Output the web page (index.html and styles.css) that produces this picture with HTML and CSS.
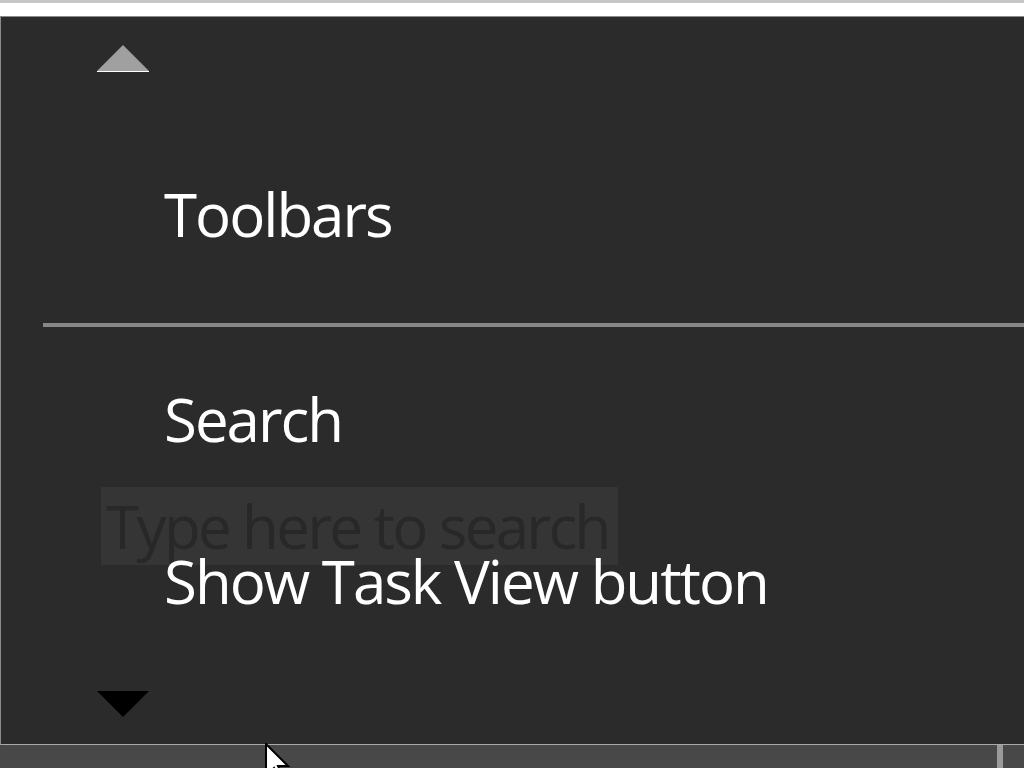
FILE: index.html
```html
<!DOCTYPE html>
<html lang="en">
<head>
<meta charset="utf-8">
<title>Taskbar menu</title>
<link rel="stylesheet" href="styles.css">
</head>
<body>
<div class="top-edge"></div>
<div class="top-strip"></div>
<div class="menu">
  <div class="ghost-search">Type here to search</div>
  <div class="arrow arrow-up"></div>
  <div class="item item-toolbars">Toolbars</div>
  <div class="separator"></div>
  <div class="item item-search">Search</div>
  <div class="item item-taskview">Show Task View button</div>
  <div class="arrow arrow-down"></div>
</div>
<div class="taskbar">
  <div class="taskbar-divider"></div>
  <svg class="cursor" width="26" height="40" viewBox="-1 -1 26 40"><polygon points="0,0 0,32 8,24 14,36 18,34 12,22 22,22" fill="#fff" stroke="#000" stroke-width="2" stroke-linejoin="miter"/></svg>
</div>
</body>
</html>
```

FILE: styles.css
```css
html, body {
  margin: 0;
  padding: 0;
}
body {
  width: 1024px;
  height: 768px;
  overflow: hidden;
  background: #484848;
  font-family: "Open Sans", "Noto Sans", sans-serif;
}
.top-edge {
  height: 3px;
  background: #c6c6c6;
}
.top-strip {
  height: 13px;
  background: #ffffff;
  border-bottom: 1px solid #8a8a8a;
}
.menu {
  position: relative;
  height: 728px;
  background: #2b2b2b;
  border-left: 1px solid #8c8c8c;
  border-bottom: 1px solid #aaaaaa;
  box-sizing: border-box;
  display: flex;
  flex-direction: column;
  color: #ffffff;
}
.ghost-search {
  position: absolute;
  left: 100px;
  top: 470px;
  width: 517px;
  height: 78px;
  background: #353535;
  color: #282828;
  font-size: 60px;
  letter-spacing: -2.6px;
  line-height: 78px;
  padding-left: 5px;
  box-sizing: border-box;
  overflow: hidden;
  white-space: nowrap;
}
.arrow {
  width: 0;
  height: 0;
  margin-left: 96px;
  border-left: 26px solid transparent;
  border-right: 26px solid transparent;
}
.arrow-up {
  margin-top: 28px;
  border-bottom: 26px solid #a0a0a0;
  box-shadow: 0 1px 0 0 #ffffff;
}
.arrow-down {
  margin-top: 70px;
  border-top: 26px solid #000000;
}
.item {
  position: relative;
  margin-left: 163px;
  font-size: 60px;
  letter-spacing: -2px;
  line-height: 80px;
  height: 80px;
  white-space: nowrap;
}
.item-toolbars {
  margin-top: 103px;
}
.separator {
  margin-top: 69px;
  margin-left: 42px;
  height: 4px;
  background: #878787;
}
.item-search {
  margin-top: 52px;
}
.item-taskview {
  margin-top: 82px;
}
.taskbar {
  position: relative;
  height: 23px;
  background: #484848;
}
.taskbar-divider {
  position: absolute;
  left: 997px;
  top: 0;
  width: 6px;
  height: 23px;
  background: #9a9a9a;
}
.cursor {
  position: absolute;
  left: 265px;
  top: -2px;
}
```
